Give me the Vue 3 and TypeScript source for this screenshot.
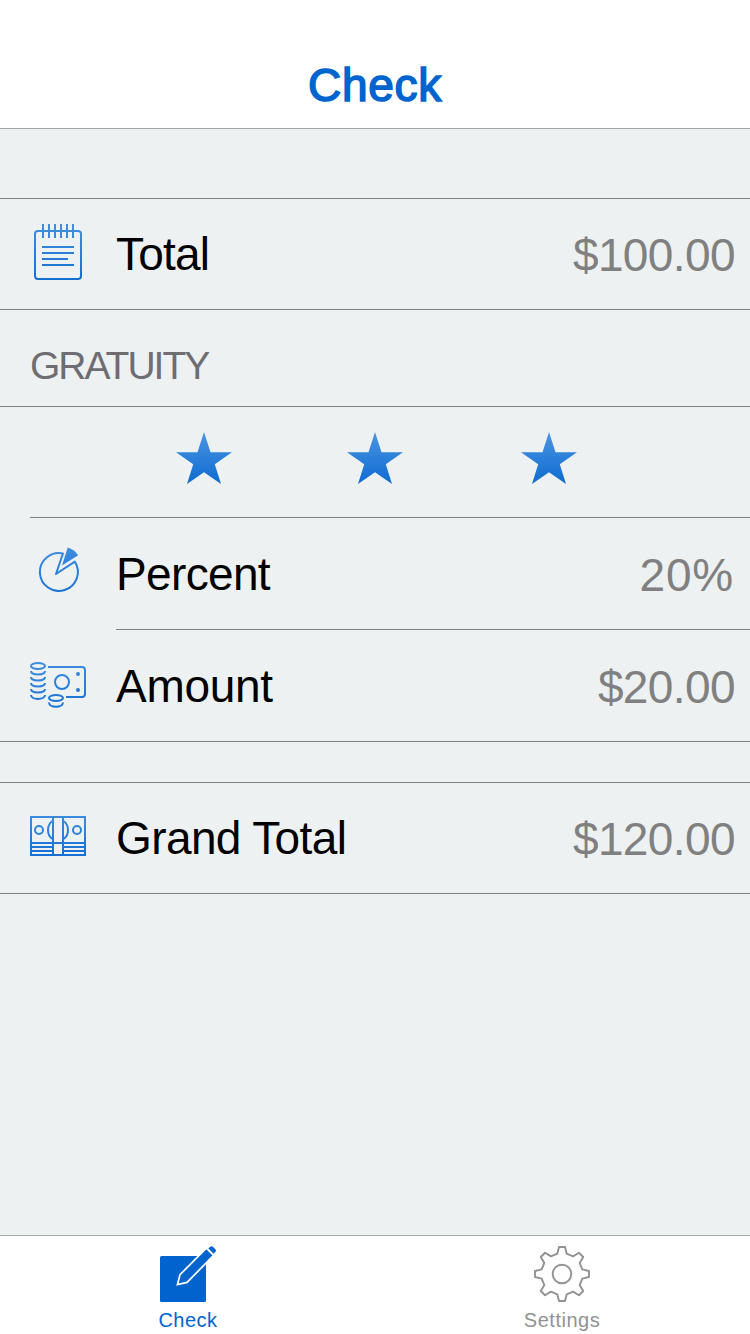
<script setup lang="ts">
const starCount = 3

function gearPath(cx: number, cy: number): string {
  const tooth: [number, number][] = [[-4.7, -20.3], [-3, -27], [3, -27], [4.7, -20.3]]
  const points: string[] = []
  for (let i = 0; i < 8; i++) {
    const a = (i * Math.PI) / 4
    for (const [x, y] of tooth) {
      const px = cx + x * Math.cos(a) - y * Math.sin(a)
      const py = cy + x * Math.sin(a) + y * Math.cos(a)
      points.push(`${px.toFixed(2)} ${py.toFixed(2)}`)
    }
  }
  return `M${points.join('L')}Z`
}
const gear = gearPath(28, 28)
</script>

<template>
  <div class="screen">
    <header class="navbar"><h1 class="title">Check</h1></header>

    <main class="content">
      <section class="group">
        <div class="row">
          <svg class="icon" viewBox="30 199 56 110">
            <defs>
              <linearGradient id="gNote" gradientUnits="userSpaceOnUse" x1="0" y1="224" x2="0" y2="280">
                <stop offset="0" stop-color="#4190df" /><stop offset="1" stop-color="#146ed2" />
              </linearGradient>
            </defs>
            <g fill="none" stroke="url(#gNote)" stroke-width="2">
              <rect x="35" y="231" width="46" height="48" rx="3" />
              <path d="M43 224v14M49 224v14M55 224v14M61 224v14M67 224v14M73 224v14" />
              <path d="M42 247h32.01M42 253h32.01M42 259h26M42 265h32.01" />
            </g>
          </svg>
          <span class="label total">Total</span>
          <span class="value">$100.00</span>
        </div>
      </section>

      <h2 class="section-title"><span>GRATUITY</span></h2>

      <section class="group">
        <div class="row stars">
          <svg v-for="n in starCount" :key="n" class="star" viewBox="0 0 56 52">
            <defs>
              <linearGradient id="gStar" x1="0" y1="0" x2="0" y2="1">
                <stop offset="0" stop-color="#4a95e1" /><stop offset="1" stop-color="#0f6bd1" />
              </linearGradient>
            </defs>
            <path fill="url(#gStar)" d="M28 0L34.5 20.2H56L38.8 32.3L45 52L28 40.3L11 52L17.2 32.3L0 20.2H21.5Z" />
          </svg>
        </div>
        <div class="divider short"></div>
        <div class="row tall">
          <svg class="icon" viewBox="30 518 56 111">
            <defs>
              <linearGradient id="gPie" gradientUnits="userSpaceOnUse" x1="0" y1="544" x2="0" y2="600">
                <stop offset="0" stop-color="#4190df" /><stop offset="1" stop-color="#146ed2" />
              </linearGradient>
            </defs>
            <path fill="none" stroke="url(#gPie)" stroke-width="2" stroke-linejoin="round" d="M63 553.4A19 19 0 1 0 74.8 561.6L56 574Z" />
            <path fill="url(#gPie)" d="M67.7 547.6Q74 549.5 78.2 555.2L62 565.6Z" />
          </svg>
          <span class="label percent">Percent</span>
          <span class="value pct">20%</span>
        </div>
        <div class="divider inset"></div>
        <div class="row tall">
          <svg class="icon" viewBox="30 630 56 111">
            <defs>
              <linearGradient id="gCoin" gradientUnits="userSpaceOnUse" x1="0" y1="658" x2="0" y2="712">
                <stop offset="0" stop-color="#4190df" /><stop offset="1" stop-color="#146ed2" />
              </linearGradient>
            </defs>
            <g fill="none" stroke="url(#gCoin)" stroke-width="2">
              <ellipse cx="38" cy="666" rx="7" ry="3" />
              <path d="M31 671c0 4.6 14 4.6 14 0M31 677c0 4.6 14 4.6 14 0M31 683c0 4.6 14 4.6 14 0M31 689c0 4.6 14 4.6 14 0M31 695c0 5.2 14 5.2 14 0" />
              <ellipse cx="56" cy="698" rx="7" ry="3" />
              <path d="M49 702.5c0 5.6 14 5.6 14 0" />
              <path d="M48 667H82Q85 667 85 670V694Q85 697 82 697H66" />
              <circle cx="62" cy="682" r="7" />
            </g>
            <g fill="url(#gCoin)"><circle cx="78" cy="674" r="2" /><circle cx="78" cy="690" r="2" /></g>
          </svg>
          <span class="label amount">Amount</span>
          <span class="value">$20.00</span>
        </div>
      </section>

      <section class="group grand-group">
        <div class="row">
          <svg class="icon" viewBox="30 783 56 110">
            <defs>
              <linearGradient id="gCash" gradientUnits="userSpaceOnUse" x1="0" y1="810" x2="0" y2="858">
                <stop offset="0" stop-color="#4190df" /><stop offset="1" stop-color="#146ed2" />
              </linearGradient>
            </defs>
            <g fill="none" stroke="url(#gCash)" stroke-width="2">
              <rect x="31" y="817" width="54" height="38" />
              <path d="M53 817v38M63 817v38M31 843h54.01M31 847h22M63 847h22M31 851h22M63 851h22" />
              <circle cx="39" cy="830" r="4" /><circle cx="77" cy="830" r="4" />
              <path d="M52.5 821Q48 824 48 830T52.5 839M63.5 821Q68 824 68 830T63.5 839" />
            </g>
          </svg>
          <span class="label grand">Grand Total</span>
          <span class="value">$120.00</span>
        </div>
      </section>
    </main>

    <nav class="tabbar">
      <a class="tab active">
        <svg class="tab-icon" viewBox="160 1246 56 56">
          <rect x="160" y="1256" width="46" height="46" rx="1.5" fill="#0064cf" />
          <path d="M177.4 1284.7L180 1274.7L206.4 1248.2L213.6 1255.4L187 1282.4Z" fill="#0064cf" stroke="#fff" stroke-width="1.7" />
          <path d="M208.3 1248.6L210.2 1246.7Q211.5 1245.6 212.8 1246.7L215.4 1249.2Q216.6 1250.5 215.4 1251.8L213.5 1253.7Z" fill="#0064cf" />
        </svg>
        <span class="tab-label">Check</span>
      </a>
      <a class="tab settings">
        <svg class="tab-icon" viewBox="0 0 56 56">
          <g fill="none" stroke="#929292" stroke-width="1.9" stroke-linejoin="round">
            <path :d="gear" /><circle cx="28" cy="28" r="9.3" />
          </g>
        </svg>
        <span class="tab-label">Settings</span>
      </a>
    </nav>
  </div>
</template>

<style>
body { margin: 0; }
</style>

<style scoped>
.screen {
  width: 750px;
  height: 1334px;
  display: flex;
  flex-direction: column;
  overflow: hidden;
  background: #edf1f2;
  font-family: "Liberation Sans", Arial, sans-serif;
}
.navbar {
  height: 128px;
  flex: none;
  display: flex;
  justify-content: center;
  background: #fff;
  border-bottom: 1px solid #a7a7aa;
}
.title {
  margin: 60px 0 0;
  color: #0064cf;
  font-size: 46px;
  line-height: 50px;
  font-weight: 400;
  letter-spacing: 0.7px;
  -webkit-text-stroke: 1.6px #0064cf;
}
.content { flex: 1; padding-top: 69px; }
.group { border-top: 1px solid #808084; border-bottom: 1px solid #808084; }
.grand-group { margin-top: 40px; }
.row { height: 110px; display: flex; align-items: center; padding: 0 15px 0 30px; }
.row.tall { height: 111px; }
.icon { width: 56px; height: 100%; flex: none; display: block; }
.label, .value { font-size: 46px; line-height: 52px; white-space: nowrap; }
.label { margin-left: 30px; color: #000; }
.total { letter-spacing: -0.8px; }
.percent { letter-spacing: -0.65px; }
.amount { letter-spacing: -0.3px; }
.grand { letter-spacing: -0.6px; }
.value { margin-left: auto; padding-top: 2px; color: #808080; letter-spacing: -0.6px; }
.pct { margin-right: 1px; letter-spacing: 0.8px; }
.section-title {
  margin: 0;
  height: 96px;
  padding: 0 30px;
  display: flex;
  align-items: center;
  color: #6d6d72;
  font-size: 39px;
  font-weight: 400;
  letter-spacing: -2px;
}
.section-title span { padding-top: 15px; }
.row.stars { padding: 0 0 8px 176px; height: 102px; gap: 115px; }
.star { width: 56px; height: 52px; flex: none; }
.star:last-child { margin-left: 3px; }
.divider { height: 1px; background: #808084; }
.short { margin-left: 30px; }
.inset { margin-left: 116px; }
.tabbar {
  flex: none;
  height: 98px;
  display: flex;
  background: #fff;
  border-top: 1px solid #a7a7aa;
}
.tab {
  flex: none;
  width: 374px;
  box-sizing: border-box;
  display: flex;
  flex-direction: column;
  align-items: center;
  color: #929292;
  padding-top: 10px;
}
.tab.active { width: 376px; color: #0064cf; }
.tab.settings { padding-right: 2px; }
.tab-icon { width: 56px; height: 56px; display: block; }
.tab-label { font-size: 20px; line-height: 24px; margin-top: 6px; letter-spacing: 0.5px; }
</style>
